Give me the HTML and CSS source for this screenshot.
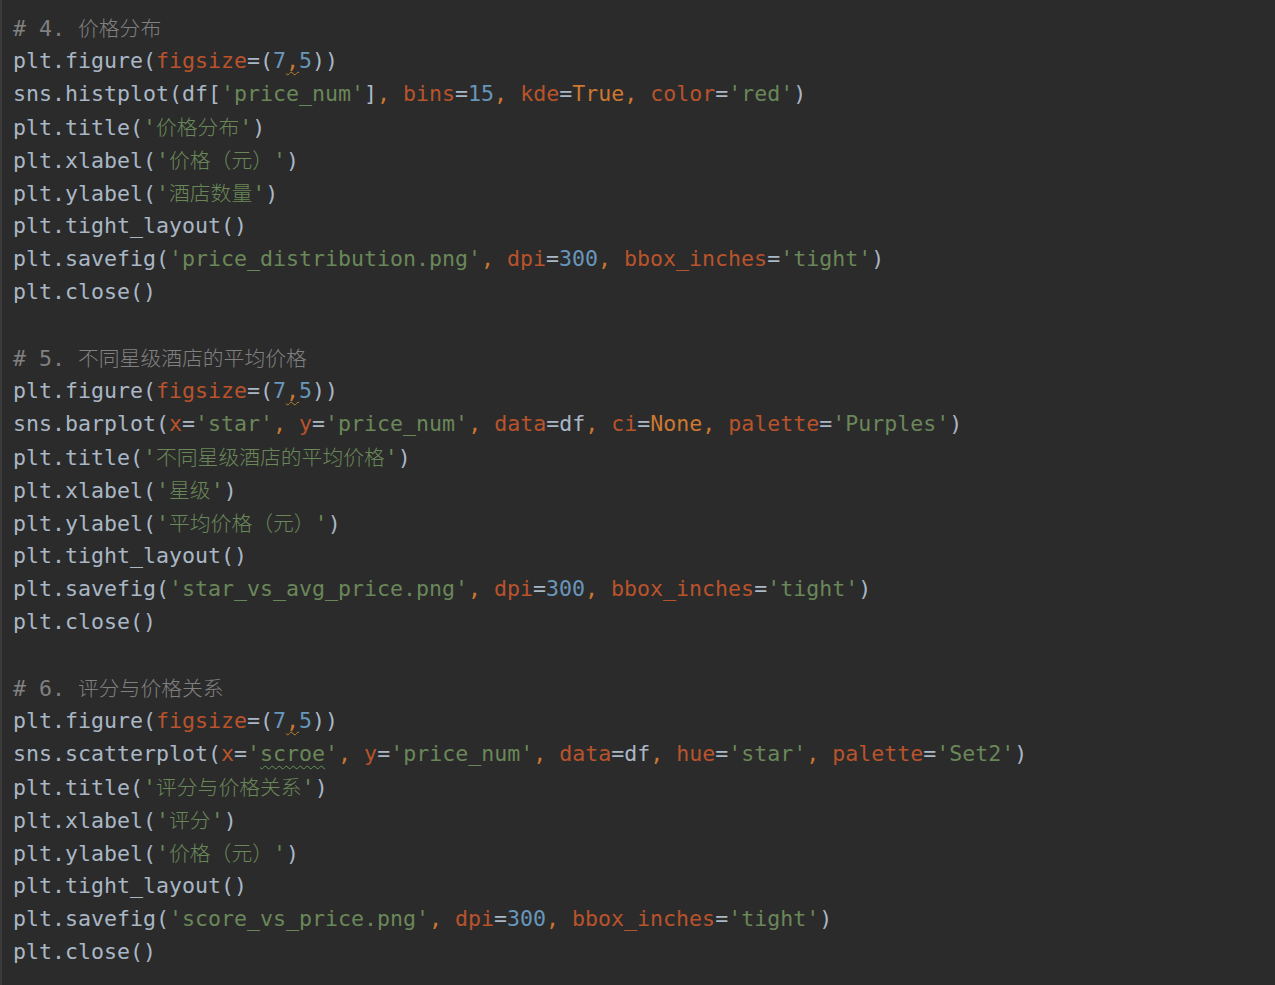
FILE: index.html
```html
<!DOCTYPE html>
<html lang="zh-CN">
<head>
<meta charset="utf-8">
<title>editor</title>
<link rel="stylesheet" href="styles.css">
</head>
<body>
<div class="editor">
<div class="line"><span class="cm"># 4. <span class="cjk">价格分布</span></span></div>
<div class="line">plt.figure(<span class="kw">figsize</span>=(<span class="nu">7</span><span class="cma warn">,</span><span class="nu">5</span>))</div>
<div class="line">sns.histplot(df[<span class="st">'price_num'</span>]<span class="cma">, </span><span class="kw">bins</span>=<span class="nu">15</span><span class="cma">, </span><span class="kw">kde</span>=<span class="bi">True</span><span class="cma">, </span><span class="kw">color</span>=<span class="st">'red'</span>)</div>
<div class="line">plt.title(<span class="st">'<span class="cjk">价格分布</span>'</span>)</div>
<div class="line">plt.xlabel(<span class="st">'<span class="cjk">价格（元）</span>'</span>)</div>
<div class="line">plt.ylabel(<span class="st">'<span class="cjk">酒店数量</span>'</span>)</div>
<div class="line">plt.tight_layout()</div>
<div class="line">plt.savefig(<span class="st">'price_distribution.png'</span><span class="cma">, </span><span class="kw">dpi</span>=<span class="nu">300</span><span class="cma">, </span><span class="kw">bbox_inches</span>=<span class="st">'tight'</span>)</div>
<div class="line">plt.close()</div>
<div class="line"> </div>
<div class="line"><span class="cm"># 5. <span class="cjk">不同星级酒店的平均价格</span></span></div>
<div class="line">plt.figure(<span class="kw">figsize</span>=(<span class="nu">7</span><span class="cma warn">,</span><span class="nu">5</span>))</div>
<div class="line">sns.barplot(<span class="kw">x</span>=<span class="st">'star'</span><span class="cma">, </span><span class="kw">y</span>=<span class="st">'price_num'</span><span class="cma">, </span><span class="kw">data</span>=df<span class="cma">, </span><span class="kw">ci</span>=<span class="bi">None</span><span class="cma">, </span><span class="kw">palette</span>=<span class="st">'Purples'</span>)</div>
<div class="line">plt.title(<span class="st">'<span class="cjk">不同星级酒店的平均价格</span>'</span>)</div>
<div class="line">plt.xlabel(<span class="st">'<span class="cjk">星级</span>'</span>)</div>
<div class="line">plt.ylabel(<span class="st">'<span class="cjk">平均价格（元）</span>'</span>)</div>
<div class="line">plt.tight_layout()</div>
<div class="line">plt.savefig(<span class="st">'star_vs_avg_price.png'</span><span class="cma">, </span><span class="kw">dpi</span>=<span class="nu">300</span><span class="cma">, </span><span class="kw">bbox_inches</span>=<span class="st">'tight'</span>)</div>
<div class="line">plt.close()</div>
<div class="line"> </div>
<div class="line"><span class="cm"># 6. <span class="cjk">评分与价格关系</span></span></div>
<div class="line">plt.figure(<span class="kw">figsize</span>=(<span class="nu">7</span><span class="cma warn">,</span><span class="nu">5</span>))</div>
<div class="line">sns.scatterplot(<span class="kw">x</span>=<span class="st">'<span class="typo">scroe</span>'</span><span class="cma">, </span><span class="kw">y</span>=<span class="st">'price_num'</span><span class="cma">, </span><span class="kw">data</span>=df<span class="cma">, </span><span class="kw">hue</span>=<span class="st">'star'</span><span class="cma">, </span><span class="kw">palette</span>=<span class="st">'Set2'</span>)</div>
<div class="line">plt.title(<span class="st">'<span class="cjk">评分与价格关系</span>'</span>)</div>
<div class="line">plt.xlabel(<span class="st">'<span class="cjk">评分</span>'</span>)</div>
<div class="line">plt.ylabel(<span class="st">'<span class="cjk">价格（元）</span>'</span>)</div>
<div class="line">plt.tight_layout()</div>
<div class="line">plt.savefig(<span class="st">'score_vs_price.png'</span><span class="cma">, </span><span class="kw">dpi</span>=<span class="nu">300</span><span class="cma">, </span><span class="kw">bbox_inches</span>=<span class="st">'tight'</span>)</div>
<div class="line">plt.close()</div>
</div>
</body>
</html>
```

FILE: styles.css
```css
html, body {
  margin: 0;
  padding: 0;
  background: #2b2b2b;
  height: 100%;
}
body {
  overflow: hidden;
}
.editor {
  box-sizing: border-box;
  min-height: 100vh;
  border-left: 2px solid #3b3b3b;
  padding: 11px 0 0 11px;
  font-family: "DejaVu Sans Mono", "Liberation Mono", "Noto Sans CJK SC", monospace;
  font-size: 21.6px;
  color: #a9b7c6;
}
.line {
  white-space: pre;
  height: 33px;
  line-height: 33px;
}
.cm { color: #808080; }
.kw { color: #b9532b; }
.bi { color: #cc7832; }
.cma { color: #cc7832; }
.nu { color: #6897bb; }
.st { color: #6a8759; }
.cjk {
  font-family: "Noto Sans CJK SC", sans-serif;
  font-size: 20.8px;
  font-weight: 300;
}
.warn {
  text-decoration: underline wavy #b7852a;
  text-decoration-thickness: 1px;
  text-underline-offset: 3px;
}
.typo {
  text-decoration: underline wavy #629755;
  text-decoration-thickness: 1px;
  text-underline-offset: 4px;
}
```
